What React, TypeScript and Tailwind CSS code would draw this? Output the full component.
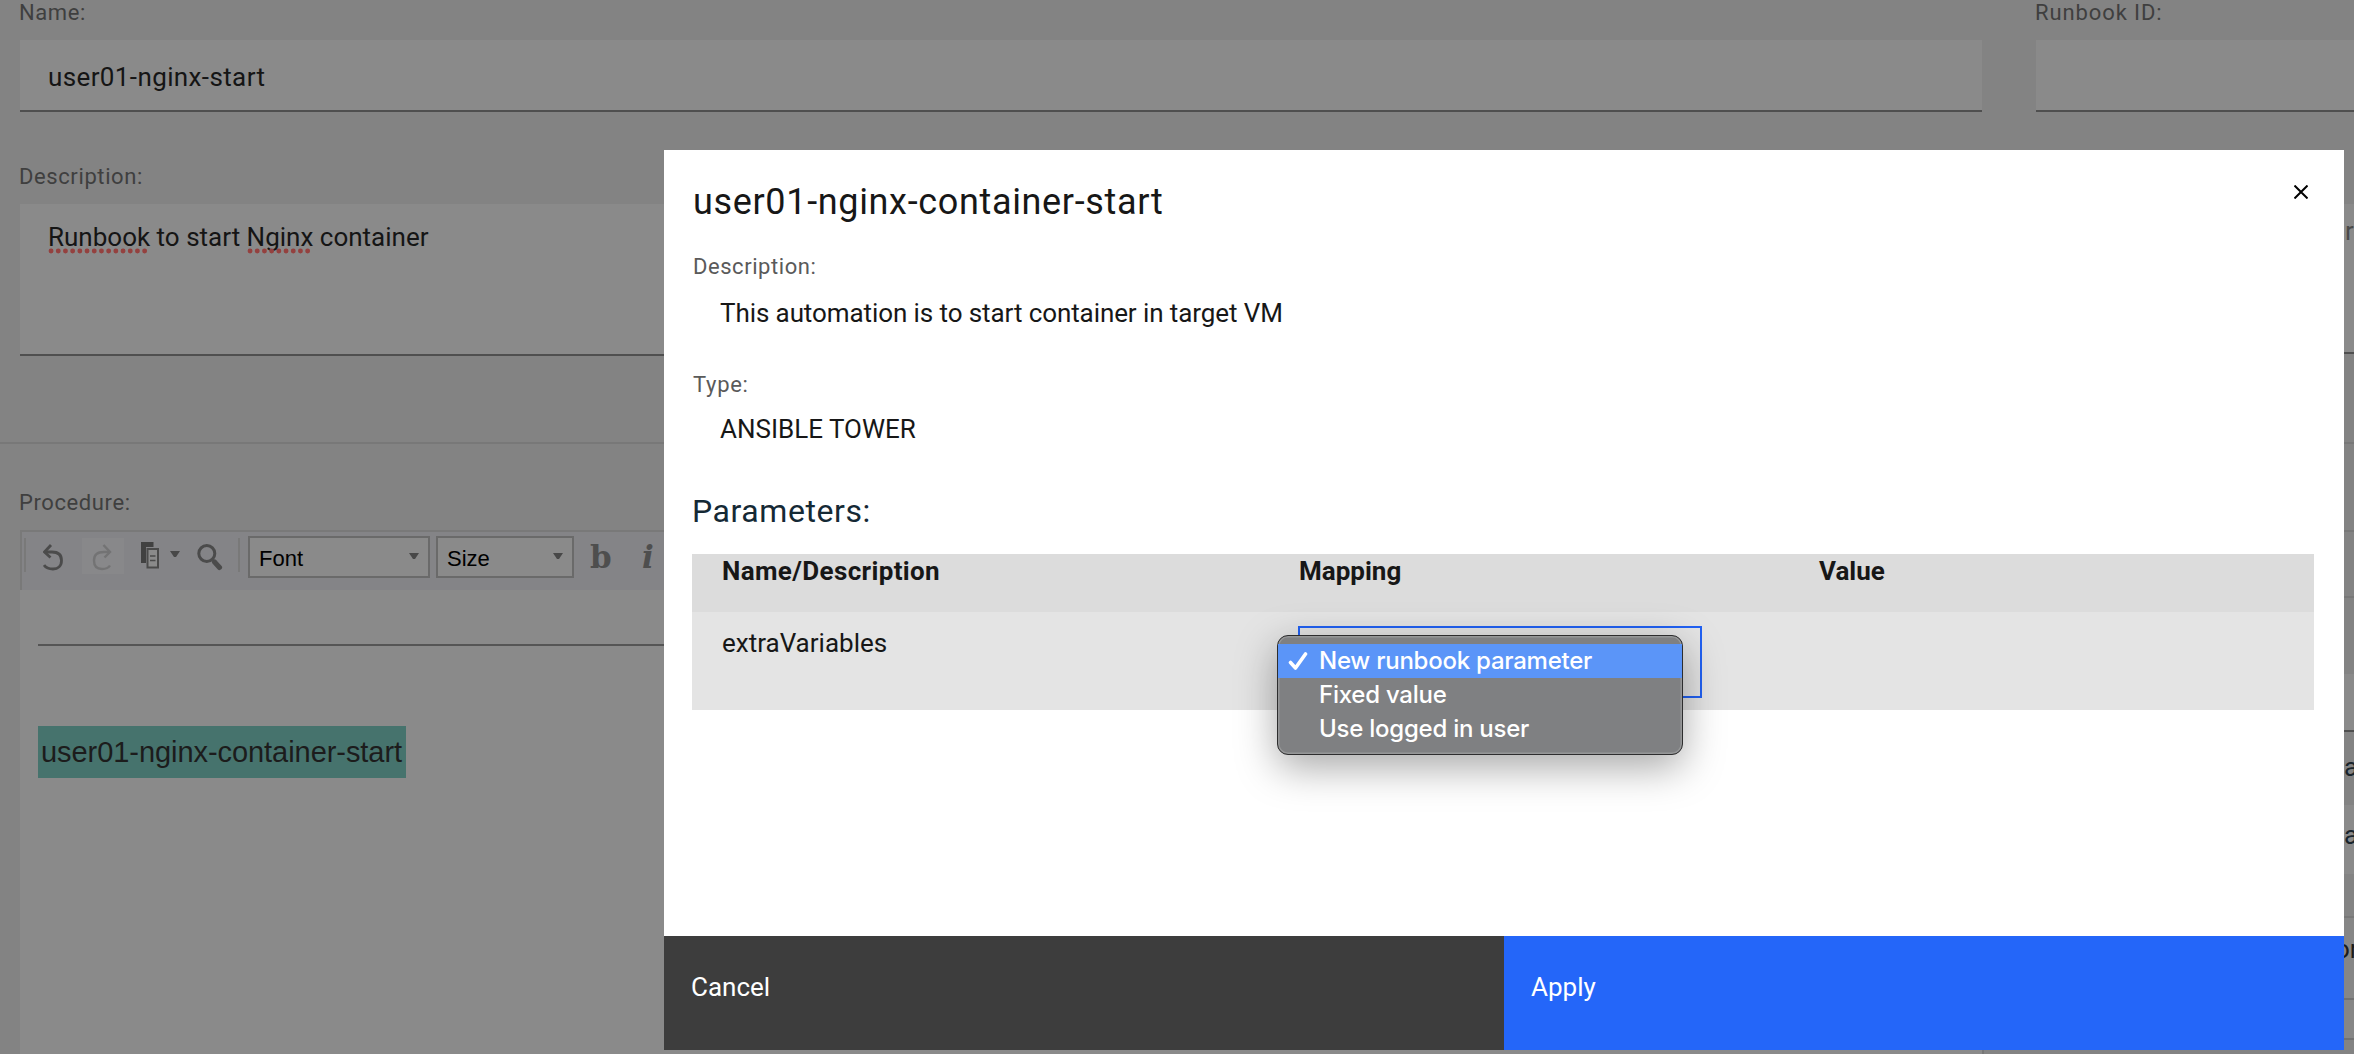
import type { ReactNode } from "react";

function FieldLabel({ children, tracking = "tracking-[0.6px]" }: { children: ReactNode; tracking?: string }) {
  return <div className={`-ml-px h-10 text-[22px] leading-[25px] text-[#3f3f3f] ${tracking}`}>{children}</div>;
}

function Caret({ className }: { className: string }) {
  return (
    <svg className={`h-[6px] w-[10px] shrink-0 ${className}`} viewBox="0 0 10 6">
      <path d="M0 0H10L6 6H4Z" fill="#484848" />
    </svg>
  );
}

function Misspelled({ children }: { children: string }) {
  return (
    <span className="relative inline-block">
      {children}
      <svg className="absolute top-[27px] left-0 h-[6px] w-full">
        <line x1="3" y1="3" x2="100%" y2="3" stroke="#94413f" strokeWidth="4.8" strokeLinecap="round" strokeDasharray="0.1 7.1" />
      </svg>
    </span>
  );
}

function Toolbar() {
  return (
    <div className="flex h-[60px] items-start border-t-2 border-l-2 border-[#797979] bg-[#848487]">
      <div className="mt-[6px] ml-[2px] h-[34px] w-[2px] bg-[#797979]" />
      <svg className="mt-[11px] ml-[17px] h-[28px] w-[21px]" viewBox="0 0 21 28" fill="none" stroke="#4b4b4b" strokeWidth="2.8">
        <path d="M1.5 9H9C15 9 18.5 12 18.5 17.5C18.5 23 15 26 10 26C6 26 3 25 1 22" />
        <path d="M8 2L1.5 9L7.5 14.5" />
      </svg>
      <div className="mt-[6px] ml-[18px] flex h-[36px] w-[42px] items-start bg-[#88888a]">
        <svg className="mt-[5px] ml-[10px] h-[28px] w-[20px]" viewBox="0 0 20 28" fill="none" stroke="#737374" strokeWidth="2.4">
          <path d="M18 9H12C5 9 2 12 2 17.5C2 23 5 26 10 26C14 26 16.5 25 18 22.5" />
          <path d="M11.5 2L18 9L12.5 14.5" />
        </svg>
      </div>
      <svg className="mt-[10px] ml-[17px] h-[27px] w-[18px]" viewBox="0 0 18 27">
        <path d="M0 0H12.5V5H5V21H0Z" fill="#414141" />
        <rect x="6.5" y="7" width="10.5" height="18.5" fill="#8a8a8a" stroke="#4a4a4a" strokeWidth="2" />
        <path d="M9 14H14.5M9 18.5H14.5" stroke="#4a4a4a" strokeWidth="1.6" />
      </svg>
      <Caret className="mt-[19px] ml-[11px]" />
      <svg className="mt-[11px] ml-[17px] h-[28px] w-[26px]" viewBox="0 0 26 28" fill="none" stroke="#4b4b4b">
        <circle cx="9.8" cy="10.5" r="8" strokeWidth="3" />
        <path d="M17.5 19L22.5 24.5" strokeWidth="5" strokeLinecap="round" />
      </svg>
      <div className="mt-[6px] ml-[15px] h-[34px] w-[2px] bg-[#797979]" />
      <div className="mt-[4px] ml-[8px] flex h-[42px] w-[182px] border-2 border-[#6a6a6a] bg-[#8a8a8a] font-['Liberation_Sans',sans-serif] text-[22px] leading-[41px] text-black">
        <span className="ml-[9px] w-[150px]">Font</span>
        <Caret className="mt-[15px]" />
      </div>
      <div className="mt-[4px] ml-[6px] flex h-[42px] w-[138px] border-2 border-[#6a6a6a] bg-[#8a8a8a] font-['Liberation_Sans',sans-serif] text-[22px] leading-[41px] text-black">
        <span className="ml-[9px] w-[106px]">Size</span>
        <Caret className="mt-[15px]" />
      </div>
      <span className="mt-[6px] ml-[16px] w-[22px] font-['DejaVu_Serif',serif] text-[31px] leading-[38px] font-bold text-[#4e4e4e]">b</span>
      <span className="mt-[6px] ml-[30px] font-['DejaVu_Serif',serif] text-[31px] leading-[38px] font-bold text-[#4e4e4e] italic">i</span>
    </div>
  );
}

function RunbookPage() {
  return (
    <div className="h-[1054px] w-[2354px] overflow-hidden bg-[#838383]">
      <div className="flex h-[444px] gap-[54px] border-b-2 border-[#787878] pl-5">
        <div className="w-[1962px] shrink-0">
          <FieldLabel>Name:</FieldLabel>
          <div className="h-[72px] border-b-2 border-[#4f4f4f] bg-[#8a8a8a] pt-[21px] pl-7 text-[26px] leading-8 tracking-[0.38px] text-[#151515]">
            user01-nginx-start
          </div>
          <div className="mt-[52px]">
            <FieldLabel>Description:</FieldLabel>
          </div>
          <div className="h-[152px] border-b-2 border-[#4f4f4f] bg-[#8a8a8a] pt-[17px] pl-7 text-[26px] leading-8 text-[#151515]">
            <Misspelled>Runbook</Misspelled> to start <Misspelled>Nginx</Misspelled> container
          </div>
        </div>
        <div className="w-[318px] shrink-0">
          <FieldLabel tracking="tracking-[0.9px]">Runbook ID:</FieldLabel>
          <div className="h-[72px] border-b-2 border-[#4f4f4f] bg-[#8a8a8a]" />
          <div className="mt-[92px] flex h-[150px] justify-end border-b-2 border-[#4f4f4f] bg-[#8a8a8a] pt-[11px] text-[26px] leading-8 text-[#4a4a4a]">
            <span className="w-[9px]">r</span>
          </div>
        </div>
      </div>
      <div className="flex h-[610px]">
        <div className="w-[1982px] shrink-0 pt-[46px] pl-5">
          <FieldLabel>Procedure:</FieldLabel>
          <Toolbar />
          <div className="h-[464px] bg-[#8a8a8a] pt-[54px] pl-[18px]">
            <div className="h-[2px] bg-[#555]" />
            <div className="mt-20 h-[52px] w-[368px] bg-[#46736d] pl-[3px] font-['Liberation_Sans',sans-serif] text-[29px] leading-[52px] tracking-[-0.06px] text-[#1c1c1c]">
              user01-nginx-container-start
            </div>
          </div>
        </div>
        <div className="w-[372px] shrink-0 border-l-2 border-[#777] text-[26px] leading-8">
          <div className="h-[88px] border-b-2 border-[#787878]" />
          <div className="h-[66px] border-b-2 border-[#787878]" />
          <div className="h-[76px]" />
          <div className="h-[58px] border-b-2 border-[#4f4f4f] bg-[#8a8a8a]" />
          <div className="flex h-[73px] justify-end pt-[19px] text-[#19242c]"><span className="w-[10px]">a</span></div>
          <div className="flex h-[69px] justify-end bg-[#8a8a8a] pt-[14px] text-[#19242c]"><span className="w-[10px]">a</span></div>
          <div className="h-[44px] border-b-2 border-[#787878]" />
          <div className="flex h-[82px] justify-end border-b-2 border-[#717171] bg-[#868686] pt-[15px] text-[#1c1c1c]"><span className="w-[19px]">or</span></div>
          <div className="h-[40px] border-b-2 border-[#717171] bg-[#868686]" />
        </div>
      </div>
    </div>
  );
}

function MappingMenu() {
  return (
    <div className="absolute top-[7px] -left-[23px] z-10 h-[120px] w-[406px] rounded-[11px] border-[1.5px] border-[#2d2d2e] bg-[#7f8082] pt-2 font-['Inter',sans-serif] text-[24px] leading-[34px] font-medium tracking-[-0.24px] text-white shadow-[0_12px_40px_rgba(0,0,0,0.35),inset_0_0_0_1.5px_#969798]">
      <div className="flex h-[34px] items-center bg-[#5b95f8]">
        <svg className="ml-[10px] h-[20px] w-[20px]" viewBox="0 0 20 20" fill="none" stroke="white" strokeWidth="3.6" strokeLinecap="round" strokeLinejoin="round">
          <path d="M2.5 11.5L7.5 17L17.5 3" />
        </svg>
        <span className="ml-[11px]">New runbook parameter</span>
      </div>
      <div className="pl-[41px]">Fixed value</div>
      <div className="pl-[41px]">Use logged in user</div>
    </div>
  );
}

function AutomationDialog() {
  return (
    <div className="absolute top-[150px] left-[664px] flex h-[900px] w-[1680px] flex-col bg-white text-[26px] leading-8 text-[#171717]">
      <div className="flex-1 pt-8 pr-[30px] pl-7">
        <div className="flex justify-between">
          <h1 className="pl-px text-[36px] leading-10 tracking-[0.66px]">user01-nginx-container-start</h1>
          <svg className="mt-[3px] mr-[6px] h-[14px] w-[14px]" viewBox="0 0 14 14" stroke="black" strokeWidth="2">
            <path d="M0.5 0.5L13.5 13.5M13.5 0.5L0.5 13.5" />
          </svg>
        </div>
        <div className="mt-[30px] pl-px text-[22px] leading-[29px] tracking-[0.55px] text-[#5a5a5a]">Description:</div>
        <div className="mt-4 pl-7 tracking-[-0.09px]">This automation is to start container in target VM</div>
        <div className="mt-[41px] pl-px text-[22px] leading-[29px] tracking-[0.7px] text-[#5a5a5a]">Type:</div>
        <div className="mt-[14px] pl-7">ANSIBLE TOWER</div>
        <h2 className="mt-[46px] text-[32px] leading-10 tracking-[0.56px] text-[#152935]">Parameters:</h2>
        <div className="mt-[23px]">
          <div className="grid h-[58px] grid-cols-[577px_520px_1fr] bg-[#dcdcdc] pt-px pl-[30px] font-bold">
            <span className="tracking-[0.36px]">Name/Description</span>
            <span>Mapping</span>
            <span>Value</span>
          </div>
          <div className="grid h-[98px] grid-cols-[576px_521px_1fr] bg-[#e4e4e4] pl-[30px]">
            <span className="pt-[15px]">extraVariables</span>
            <div className="pt-[14px]">
              <div className="relative h-[72px] w-[404px] border-2 border-[#2161f3]">
                <MappingMenu />
              </div>
            </div>
          </div>
        </div>
      </div>
      <div className="flex h-[114px] text-white">
        <div className="w-1/2 bg-[#3d3d3d] pt-[35px] pl-[27px]">Cancel</div>
        <div className="w-1/2 bg-[#2466f9] pt-[35px] pl-[27px]">Apply</div>
      </div>
    </div>
  );
}

export default function App() {
  return (
    <div className="relative h-[1054px] w-[2354px] overflow-hidden font-['Roboto',sans-serif]">
      <RunbookPage />
      <AutomationDialog />
    </div>
  );
}
